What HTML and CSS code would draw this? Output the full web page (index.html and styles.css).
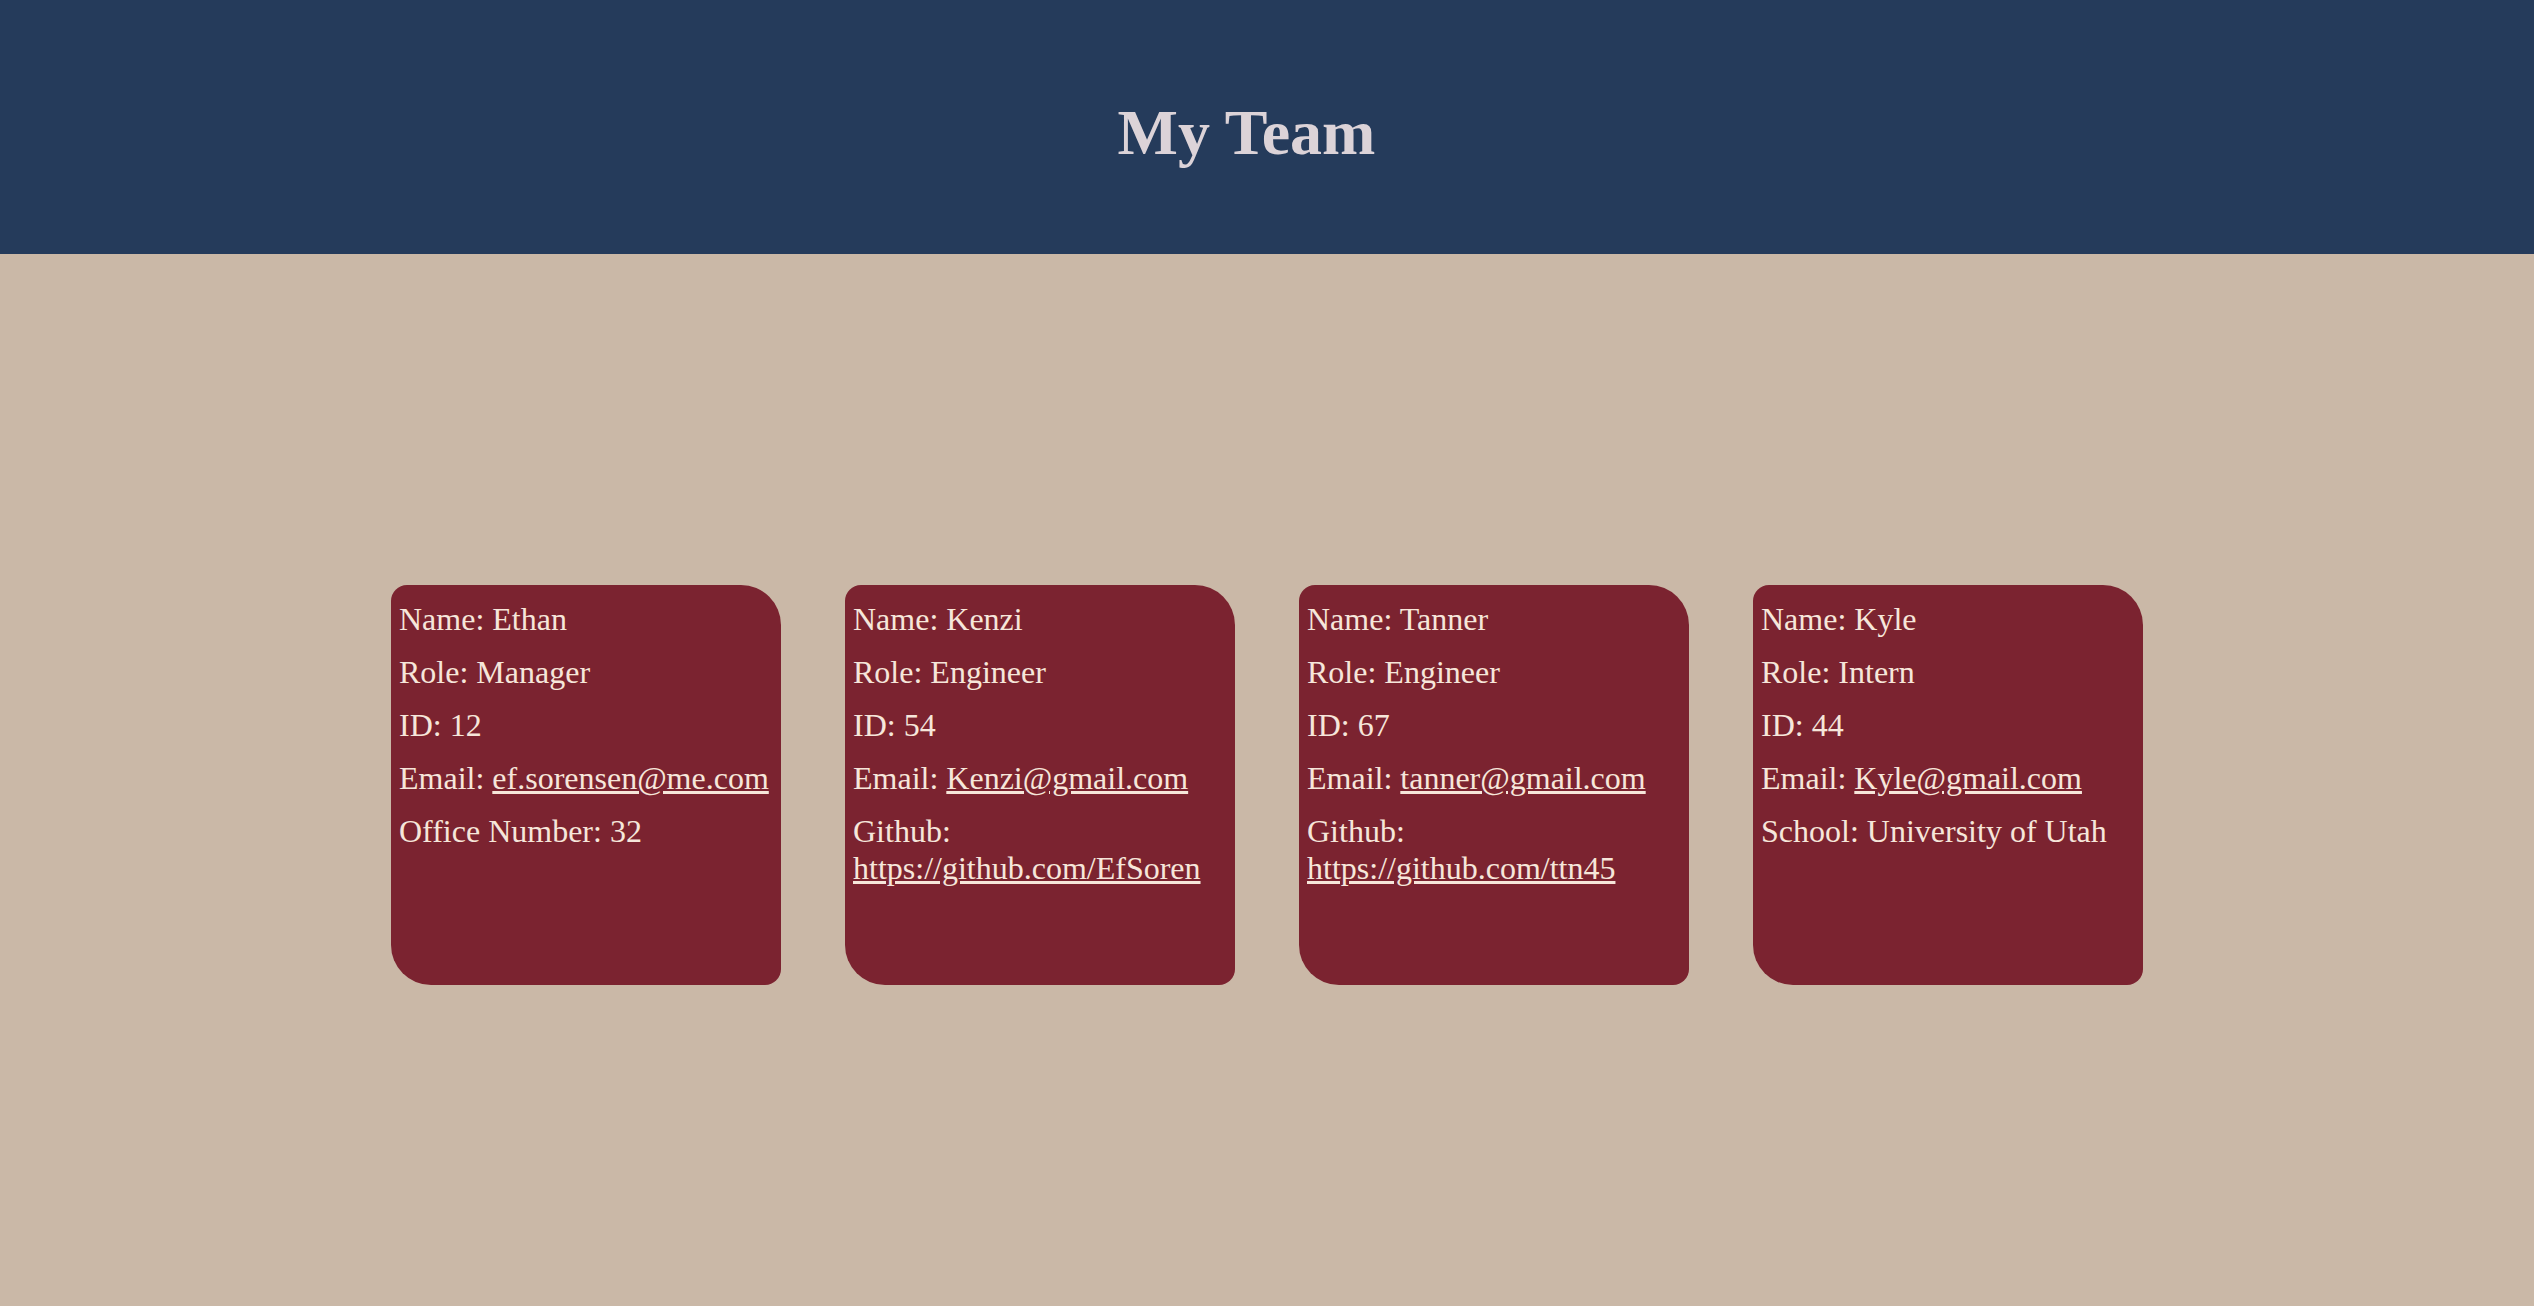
FILE: index.html
```html
<!DOCTYPE html>
<html lang="en">
<head>
<meta charset="UTF-8">
<title>My Team</title>
<link rel="stylesheet" href="styles.css">
</head>
<body>
<header class="top">
  <h1 class="title">My Team</h1>
</header>
<main class="team">
  <div class="card">
    <p>Name: Ethan</p>
    <p>Role: Manager</p>
    <p>ID: 12</p>
    <p>Email: <a href="#">ef.sorensen@me.com</a></p>
    <p>Office Number: 32</p>
  </div>
  <div class="card">
    <p>Name: Kenzi</p>
    <p>Role: Engineer</p>
    <p>ID: 54</p>
    <p>Email: <a href="#">Kenzi@gmail.com</a></p>
    <p>Github: <a href="#">https://github.com/EfSoren</a></p>
  </div>
  <div class="card">
    <p>Name: Tanner</p>
    <p>Role: Engineer</p>
    <p>ID: 67</p>
    <p>Email: <a href="#">tanner@gmail.com</a></p>
    <p>Github: <a href="#">https://github.com/ttn45</a></p>
  </div>
  <div class="card">
    <p>Name: Kyle</p>
    <p>Role: Intern</p>
    <p>ID: 44</p>
    <p>Email: <a href="#">Kyle@gmail.com</a></p>
    <p>School: University of Utah</p>
  </div>
</main>
</body>
</html>
```
FILE: styles.css
```css
html, body {
  margin: 0;
  padding: 0;
}
body {
  background: #cab8a7;
  font-family: "Liberation Serif", "Times New Roman", serif;
  height: 1306px;
  overflow: hidden;
}
.top {
  background: #253b5b;
  height: 254px;
  box-sizing: border-box;
  padding-top: 96px;
}
.title {
  margin: 0;
  text-align: center;
  font-size: 64px;
  font-weight: bold;
  color: #dcd3d8;
  padding-right: 41px;
  line-height: normal;
}
.team {
  display: flex;
  justify-content: center;
  gap: 64px;
  padding-top: 331px;
}
.card {
  width: 390px;
  height: 400px;
  box-sizing: border-box;
  background: #7b2330;
  color: #f6e6da;
  border-radius: 16px 40px 16px 40px;
  padding: 16px 8px 0 8px;
  font-size: 32px;
}
.card p {
  margin: 0 0 16px 0;
  line-height: normal;
}
.card a {
  color: #f6e6da;
  text-decoration: underline;
}
```
